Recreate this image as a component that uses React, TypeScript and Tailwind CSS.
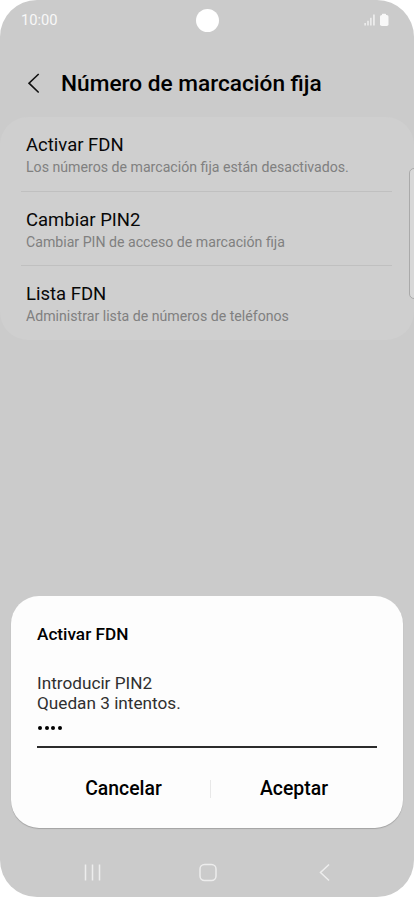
import React from 'react';

interface Option {
  title: string;
  description: string;
}

const options: Option[] = [
  { title: 'Activar FDN', description: 'Los números de marcación fija están desactivados.' },
  { title: 'Cambiar PIN2', description: 'Cambiar PIN de acceso de marcación fija' },
  { title: 'Lista FDN', description: 'Administrar lista de números de teléfonos' },
];

const StatusBar: React.FC = () => (
  <div className="flex h-10 shrink-0 items-center justify-between pl-[21px] pr-[20px]">
    <span className="w-12 text-[14.7px] leading-none text-[#f8f8f8]">10:00</span>
    <div className="h-[23px] w-[23px] rounded-full bg-white" />
    <div className="flex w-12 justify-end pr-[4px]">
      <svg width="26" height="14" viewBox="0 0 26 14" fill="#f8f8f8">
        <rect x="0.5" y="10" width="1.2" height="2.5" />
        <rect x="3.4" y="7.8" width="1.2" height="4.7" />
        <rect x="6.3" y="4.8" width="1.2" height="7.7" />
        <rect x="9.3" y="1.5" width="1.3" height="11" />
        <rect x="18" y="0.8" width="4" height="2" rx="0.6" />
        <rect x="16" y="2" width="8.5" height="11" rx="1.8" />
      </svg>
    </div>
  </div>
);

const OptionRow: React.FC<Option> = ({ title, description }) => (
  <div className="flex h-[73.5px] flex-col px-[26px] pt-[17px]">
    <h2 className="text-[18.5px] leading-[22px] text-[#080808]">{title}</h2>
    <p className="mt-[2px] text-[14.15px] leading-[18px] text-[#808080]">{description}</p>
  </div>
);

const PinDialog: React.FC = () => (
  <div className="mx-[11px] h-[232.5px] rounded-[28px] bg-[#fdfdfd] px-[26px] pt-[28.5px] shadow-[0_1px_1px_rgba(0,0,0,0.2)]">
    <h2 className="text-[17.2px] font-medium leading-[20px] text-black">Activar FDN</h2>
    <p className="mt-[29px] text-[17.2px] leading-[20px] text-[#303030]">
      Introducir PIN2
      <br />
      Quedan 3 intentos.
    </p>
    <div className="flex h-[35px] items-start gap-[2.4px] border-b-2 border-[#2c2c2c] pl-[1px] pt-[13px]">
      {[0, 1, 2, 3].map((digit) => (
        <span key={digit} className="h-[4.2px] w-[4.2px] rounded-full bg-black" />
      ))}
    </div>
    <div className="mt-[30px] flex items-center text-[19.4px] font-medium leading-[22px] text-black">
      <button className="w-[173px] text-center">Cancelar</button>
      <span className="h-[18px] w-px bg-[#e8e8e8]" />
      <button className="flex-1 text-center">Aceptar</button>
    </div>
  </div>
);

const NavigationBar: React.FC = () => (
  <div className="flex h-[69px] shrink-0 items-center justify-between pl-[82px] pr-[80px] pt-[18px]">
    <svg width="20" height="20" viewBox="0 0 20 20" fill="none" stroke="#ededed" strokeWidth="1.5">
      <path d="M3.5 2.5v16M10.5 2.5v16M17.5 2.5v16" />
    </svg>
    <svg width="20" height="20" viewBox="0 0 20 20" fill="none" stroke="#ededed" strokeWidth="1.5">
      <rect x="2" y="2.5" width="16" height="16" rx="4.5" />
    </svg>
    <svg width="20" height="20" viewBox="0 0 20 20" fill="none" stroke="#ededed" strokeWidth="1.5">
      <path d="M15 2.5L6.5 10.5l8.5 8" />
    </svg>
  </div>
);

const App: React.FC = () => {
  return (
    <div className="h-[897px] w-[414px] overflow-hidden bg-white font-['Roboto',sans-serif]">
      <div className="relative flex h-full flex-col overflow-hidden rounded-[37px] bg-[#cbcbcb]">
        <StatusBar />
        <header className="flex h-[77px] shrink-0 items-center pl-[27px] pt-[10px]">
          <svg width="14" height="22" viewBox="0 0 14 22" fill="none" stroke="#111" strokeWidth="1.6">
            <path d="M11.7 1L2 10.2l9.7 9.3" />
          </svg>
          <h1 className="ml-[20px] text-[22.65px] font-medium leading-[28px] text-black">Número de marcación fija</h1>
        </header>

        <main className="shrink-0 rounded-[28px] bg-[#cfcfcf] pt-[0.4px]">
          {options.map((option, index) => (
            <React.Fragment key={option.title}>
              {index > 0 && <div className="ml-[21px] mr-[22px] h-px bg-[#c0c0c0]" />}
              <OptionRow {...option} />
            </React.Fragment>
          ))}
        </main>

        {/* Edge panel handle */}
        <div className="absolute -right-[10px] top-[168px] h-[131px] w-[15px] rounded-[5px] border border-[#aaaaaa] bg-[#d8d8d8]" />

        <div className="mt-auto">
          <PinDialog />
        </div>
        <NavigationBar />
      </div>
    </div>
  );
};

export default App;
